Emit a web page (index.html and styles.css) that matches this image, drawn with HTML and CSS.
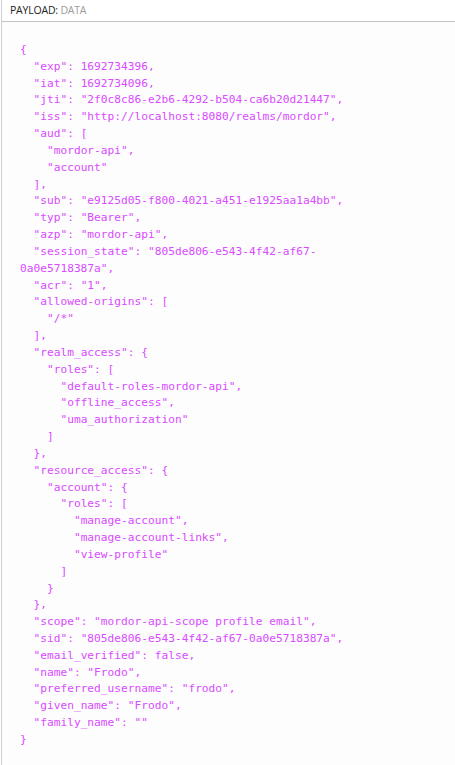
FILE: index.html
```html
<!DOCTYPE html>
<html>
<head>
<meta charset="utf-8">
<link rel="stylesheet" href="styles.css">
</head>
<body>
<section class="panel">
  <header class="panel-head"><span class="label">PAYLOAD:</span> <span class="sub">DATA</span></header>
  <div class="panel-body">
<pre class="json">{
  "exp": 1692734396,
  "iat": 1692734096,
  "jti": "2f0c8c86-e2b6-4292-b504-ca6b20d21447",
  "iss": "http://localhost:8080/realms/mordor",
  "aud": [
    "mordor-api",
    "account"
  ],
  "sub": "e9125d05-f800-4021-a451-e1925aa1a4bb",
  "typ": "Bearer",
  "azp": "mordor-api",
  "session_state": "805de806-e543-4f42-af67-0a0e5718387a",
  "acr": "1",
  "allowed-origins": [
    "/*"
  ],
  "realm_access": {
    "roles": [
      "default-roles-mordor-api",
      "offline_access",
      "uma_authorization"
    ]
  },
  "resource_access": {
    "account": {
      "roles": [
        "manage-account",
        "manage-account-links",
        "view-profile"
      ]
    }
  },
  "scope": "mordor-api-scope profile email",
  "sid": "805de806-e543-4f42-af67-0a0e5718387a",
  "email_verified": false,
  "name": "Frodo",
  "preferred_username": "frodo",
  "given_name": "Frodo",
  "family_name": ""
}</pre>
  </div>
</section>
</body>
</html>
```
FILE: styles.css
```css
html, body {
  margin: 0;
  padding: 0;
  background: #ffffff;
}
body {
  padding-left: 1px;
  height: 765px;
  box-sizing: border-box;
}
.panel {
  border-left: 1px solid #cfcfcf;
  min-height: 765px;
  background: #fdfdfd;
}
.panel-head {
  height: 22px;
  box-sizing: border-box;
  border-bottom: 1px solid #c4c4c4;
  background: #ffffff;
  padding: 4px 0 0 8px;
  font-family: "Open Sans", "Liberation Sans", sans-serif;
  font-size: 10.5px;
  line-height: 13px;
  letter-spacing: -0.2px;
}
.label {
  color: #222222;
}
.sub {
  color: #9a9a9a;
}
.panel-body {
  padding: 20px 0 0 18px;
}
.json {
  margin: 0;
  width: 370px;
  white-space: pre-wrap;
  font-family: "DejaVu Sans Mono", "Liberation Mono", monospace;
  font-size: 11.2px;
  line-height: 16.83px;
  color: #d94bff;
}
```
